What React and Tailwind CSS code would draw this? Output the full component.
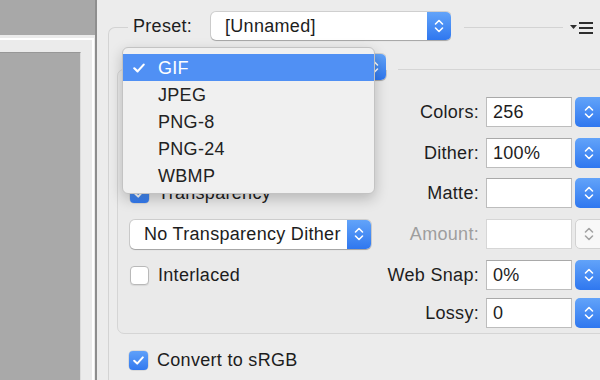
import React from "react";

function Chevrons({ color = "white" }) {
  return (
    <svg width="10" height="16" viewBox="0 0 10 16" fill="none" stroke={color} strokeWidth="1.6" strokeLinecap="round" strokeLinejoin="round">
      <path d="M1.5 6 L5 2.5 L8.5 6" />
      <path d="M1.5 10 L5 13.5 L8.5 10" />
    </svg>
  );
}

function Select({ className, text }) {
  return (
    <div className={"flex shrink-0 rounded-[5px] bg-white overflow-hidden shadow-[0_0_0_1px_rgba(0,0,0,0.12),0_1px_1px_rgba(0,0,0,0.2)] " + className}>
      <div className="flex-1 min-w-0 flex items-center pl-[14px] whitespace-nowrap overflow-hidden">{text}</div>
      <div className="w-[24px] shrink-0 flex items-center justify-center bg-linear-to-b from-[#62a3f9] to-[#2f77ef]">
        <Chevrons />
      </div>
    </div>
  );
}

function CheckMark({ w = 11, h = 9 }) {
  return (
    <svg width={w} height={h} viewBox="0 0 11 9" fill="none" stroke="white" strokeWidth="2" strokeLinecap="round" strokeLinejoin="round">
      <path d="M1.2 4.8 L4.2 7.6 L9.8 1.4" />
    </svg>
  );
}

function Checkbox({ checked }) {
  return checked ? (
    <div className="w-[19px] h-[19px] shrink-0 rounded-[4px] flex items-center justify-center bg-linear-to-b from-[#5fa0f9] to-[#3279ef] shadow-[0_0_0_0.5px_rgba(0,0,0,0.15)]">
      <CheckMark />
    </div>
  ) : (
    <div className="w-[19px] h-[19px] shrink-0 rounded-[4px] bg-white border border-[#b9b9b9] shadow-[0_1px_1px_rgba(0,0,0,0.08)]" />
  );
}

function Field({ label, value, disabled }) {
  return (
    <>
      <div className={"w-[108px] shrink-0 text-right whitespace-nowrap " + (disabled ? "text-[#9e9e9e]" : "")}>{label}</div>
      <div className={"ml-[7px] w-[86px] h-[30px] shrink-0 flex items-center pl-[6px] bg-white border " + (disabled ? "border-[#d6d6d6]" : "border-[#bdbdbd] border-t-[#a9a9a9]")}>
        {value}
      </div>
      {disabled ? (
        <div className="ml-[3px] w-[27px] h-[30px] shrink-0 rounded-l-[5px] flex items-center justify-center bg-[#f8f8f8] border border-[#d2d2d2]">
          <Chevrons color="#a3a3a3" />
        </div>
      ) : (
        <div className="ml-[3px] w-[27px] h-[30px] shrink-0 rounded-l-[5px] flex items-center justify-center bg-linear-to-b from-[#62a3f9] to-[#2f77ef]">
          <Chevrons />
        </div>
      )}
    </>
  );
}

export default function App() {
  const items = ["GIF", "JPEG", "PNG-8", "PNG-24", "WBMP"];
  return (
    <div className="relative flex w-[600px] h-[380px] overflow-hidden bg-[#ececec] font-['Liberation_Sans',Arial,sans-serif] text-[18px] tracking-[0.3px] text-[#1d1d1d] leading-none">
      {/* preview column */}
      <div className="w-[97px] shrink-0 flex flex-col border-r-2 border-[#8e8e8e]">
        <div className="h-[35px] shrink-0 bg-[#a8a8a8]" />
        <div className="flex-1 flex flex-col pt-[3px] pr-[1px] bg-[#ebebeb]">
          <div className="flex-1 flex flex-col border-t-2 border-r-2 border-white pt-[12px] pr-[11px]">
            <div className="flex-1 bg-[#a9a9a9] border-t border-r border-t-[#979797] border-r-[#dcdcdc]" />
          </div>
        </div>
      </div>

      {/* settings */}
      <div className="flex-1 min-w-0 pl-[11px]">
        <div className="mt-[27px] w-[492px] h-[400px] border-l border-t border-[#d3d3d3] rounded-tl-[7px]">
          {/* preset row */}
          <div className="-mt-[16px] h-[28px] flex items-stretch">
            <div className="w-[19px] shrink-0" />
            <div className="w-[83px] shrink-0 flex items-center bg-[#ececec] pl-[5px]">Preset:</div>
            <Select className="w-[240px]" text="[Unnamed]" />
            <div className="w-[13px] shrink-0 bg-[#ececec]" />
            <div className="flex-1" />
            <div className="w-[37px] shrink-0 flex items-center bg-[#ececec] pl-[7px]">
              <svg width="24" height="16" viewBox="0 0 24 16">
                <path d="M0 7 H7 L3.5 11 Z" fill="#2e2e2e" />
                <rect x="9" y="4" width="14" height="2" fill="#2e2e2e" />
                <rect x="9" y="9" width="14" height="2" fill="#2e2e2e" />
                <rect x="9" y="14" width="14" height="2" fill="#2e2e2e" />
              </svg>
            </div>
          </div>

          {/* optimized settings box */}
          <div className="ml-[8px] mt-[29px] w-[500px] border border-[#d5d5d5] rounded-[7px] bg-[#eaeaea] pb-[5px]">
            <div className="-mt-[16px] h-[26px] flex">
              <div className="w-[12px] shrink-0" />
              <Select className="w-[256px]" text="" />
              <div className="self-start w-[12px] h-[16px] shrink-0 bg-[#ececec]" />
            </div>

            <div className="mt-[17px] pl-[12px] flex flex-col">
              <div className="h-[30px] flex items-center">
                <div className="w-[241px] shrink-0">
                  <Select className="w-[241px] h-[29px]" text="" />
                </div>
                <Field label="Colors:" value="256" />
              </div>
              <div className="mt-[11px] h-[30px] flex items-center">
                <div className="w-[241px] shrink-0">
                  <Select className="w-[241px] h-[29px]" text="" />
                </div>
                <Field label="Dither:" value="100%" />
              </div>
              <div className="mt-[10px] h-[30px] flex items-center">
                <div className="w-[241px] shrink-0 flex items-center">
                  <Checkbox checked />
                  <span className="ml-[9px]">Transparency</span>
                </div>
                <Field label="Matte:" value="" />
              </div>
              <div className="mt-[11px] h-[30px] flex items-center">
                <div className="w-[241px] shrink-0">
                  <Select className="w-[241px] h-[29px]" text="No Transparency Dither" />
                </div>
                <Field label="Amount:" value="" disabled />
              </div>
              <div className="mt-[11px] h-[30px] flex items-center">
                <div className="w-[241px] shrink-0 flex items-center">
                  <Checkbox />
                  <span className="ml-[9px]">Interlaced</span>
                </div>
                <Field label="Web Snap:" value="0%" />
              </div>
              <div className="mt-[8px] h-[30px] flex items-center">
                <div className="w-[241px] shrink-0" />
                <Field label="Lossy:" value="0" />
              </div>
            </div>
          </div>

          <div className="mt-[16px] h-[20px] pl-[20px] flex items-center">
            <Checkbox checked />
            <span className="ml-[9px]">Convert to sRGB</span>
          </div>
        </div>
      </div>

      {/* popup menu */}
      <div className="absolute left-[122px] top-[47px] w-[253px] rounded-[6px] border border-[#c3c3c3] bg-[#f0f0f0] pt-[6px] pb-[4px] shadow-[0_5px_14px_rgba(0,0,0,0.22)]">
        {items.map((it, i) => (
          <div key={it} className={i === 0 ? "h-[27px] flex items-center bg-[#5090f4] text-white" : "h-[27px] flex items-center text-[#222]"}>
            <div className="w-[35px] shrink-0 pl-[10px] flex items-center">
              {i === 0 ? <CheckMark w={12} h={10} /> : null}
            </div>
            {it}
          </div>
        ))}
      </div>
    </div>
  );
}
